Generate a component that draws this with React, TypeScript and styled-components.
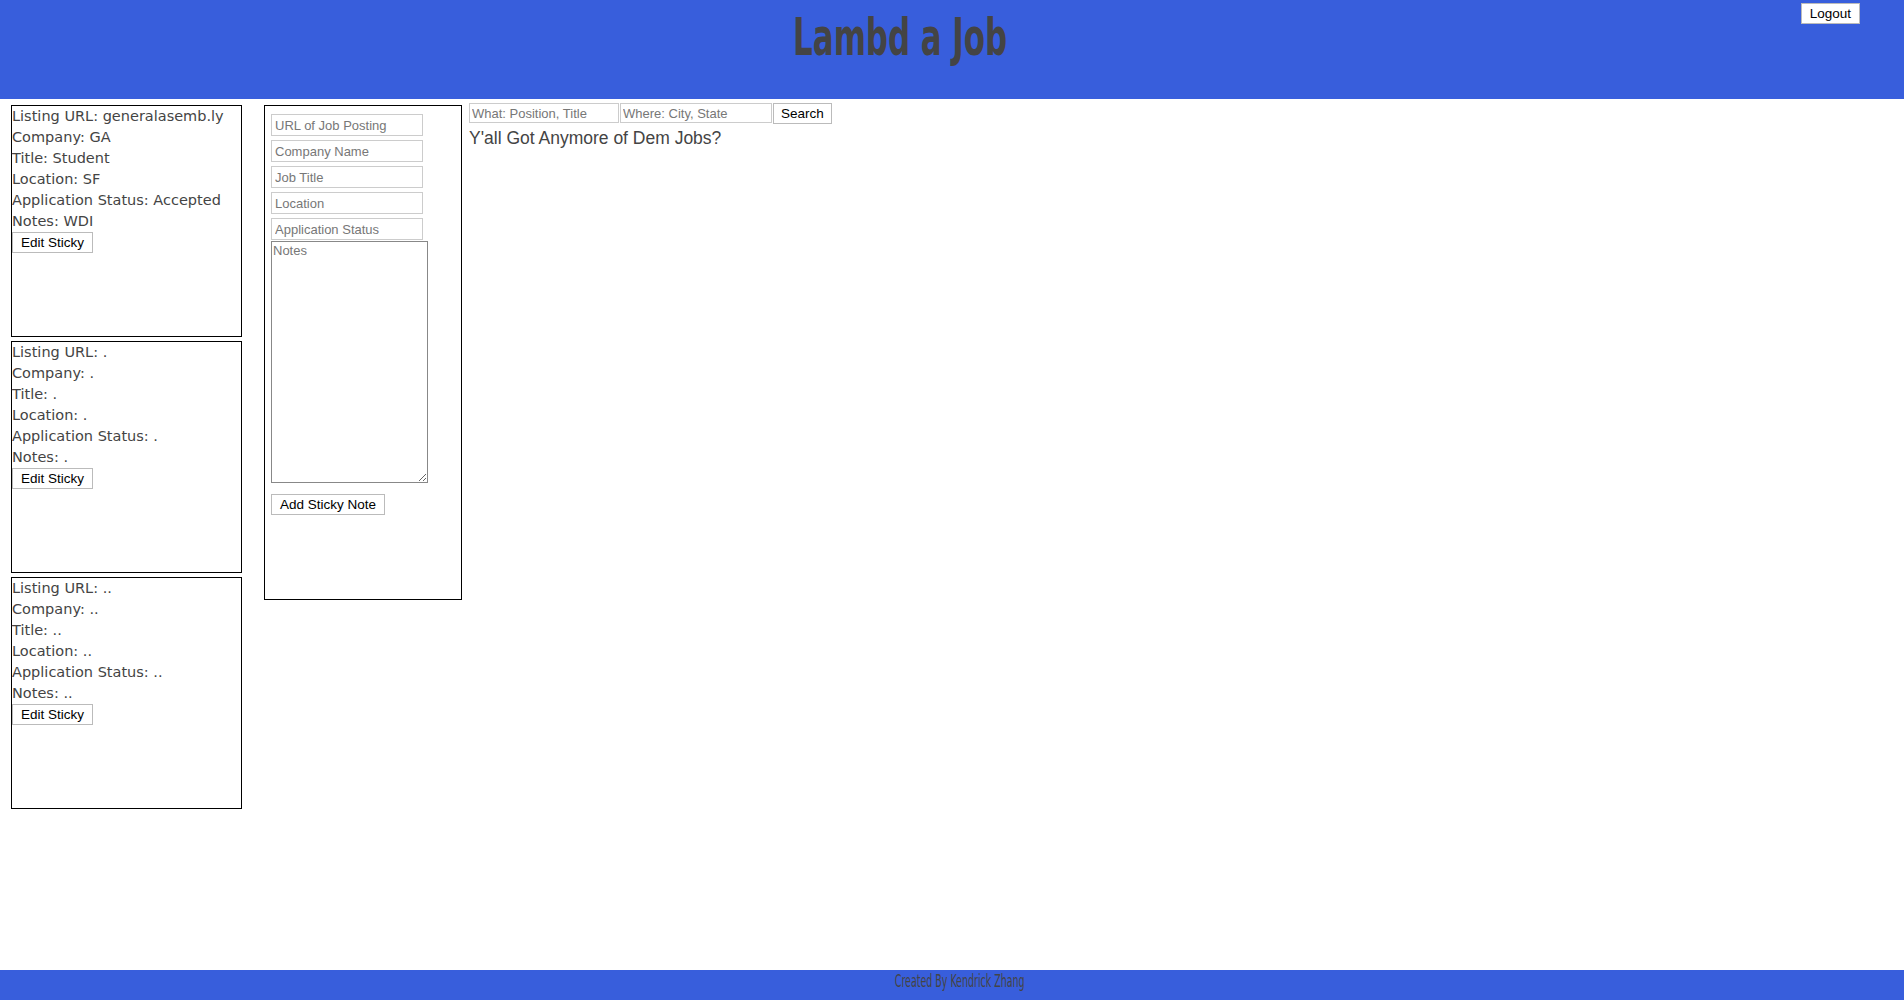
import styled, { createGlobalStyle } from "styled-components";

const GlobalStyle = createGlobalStyle`
    body {
        margin: 0;
        font-family: "Liberation Sans", Arial, sans-serif;
        background: #fff;
    }
`

type Sticky = {
    url: string;
    company: string;
    title: string;
    location: string;
    status: string;
    notes: string;
};

const stickies: Sticky[] = [
    {url: "generalasemb.ly", company: "GA", title: "Student", location: "SF", status: "Accepted", notes: "WDI"},
    {url: ".", company: ".", title: ".", location: ".", status: ".", notes: "."},
    {url: "..", company: "..", title: "..", location: "..", status: "..", notes: ".."},
];

const formFields = ["URL of Job Posting", "Company Name", "Job Title", "Location", "Application Status"];

const App = () => {
    return (
        <Page>
            <GlobalStyle/>
            <Header>
                <Title><Condensed $scale={0.66}>Lambd a Job</Condensed></Title>
                <Button>Logout</Button>
            </Header>
            <Main>
                <StickyColumn>
                    {stickies.map((s, i) => (
                        <StickyCard key={i}>
                            <Line>Listing URL: {s.url}</Line>
                            <Line>Company: {s.company}</Line>
                            <Line>Title: {s.title}</Line>
                            <Line>Location: {s.location}</Line>
                            <Line>Application Status: {s.status}</Line>
                            <Line>Notes: {s.notes}</Line>
                            <Button>Edit Sticky</Button>
                        </StickyCard>
                    ))}
                </StickyColumn>
                <FormPanel>
                    {formFields.map((f) => (
                        <FormInput key={f} placeholder={f}/>
                    ))}
                    <Notes placeholder="Notes"/>
                    <AddButton>Add Sticky Note</AddButton>
                </FormPanel>
                <SearchArea>
                    <SearchRow>
                        <SearchInput placeholder="What: Position, Title"/>
                        <SearchInput placeholder="Where: City, State" $wide/>
                        <SearchButton>Search</SearchButton>
                    </SearchRow>
                    <Heading>Y'all Got Anymore of Dem Jobs?</Heading>
                </SearchArea>
            </Main>
            <Footer>
                <Condensed $scale={0.62}>Created By Kendrick Zhang</Condensed>
            </Footer>
        </Page>
    );
};

export default App;

const blue = "#385edc";

const Page = styled.div`
    min-height: 100vh;
    display: flex;
    flex-direction: column;
`

const Header = styled.header`
    height: 99px;
    background: ${blue};
    display: flex;
    align-items: flex-start;
`

const Title = styled.h1`
    flex: 1;
    margin: 0;
    padding-top: 11px;
    text-align: center;
    font-family: "DejaVu Sans Condensed", "DejaVu Sans", sans-serif;
    font-weight: bold;
    font-size: 52px;
    line-height: 52px;
    color: #444;
`

const Condensed = styled.span<{ $scale: number }>`
    display: inline-block;
    transform: scaleX(${p => p.$scale});
    transform-origin: center;
`

const Button = styled.button`
    height: 21px;
    padding: 0 8px;
    margin: 0;
    background: #fff;
    border: 1px solid #bbb;
    font-family: "Liberation Sans", Arial, sans-serif;
    font-size: 13.5px;
    color: #000;
    cursor: pointer;

    header > & {
        margin: 3px 44px 0 0;
    }
`

const Main = styled.main`
    flex: 1;
    display: flex;
    align-items: flex-start;
`

const StickyColumn = styled.div`
    width: 231px;
    margin: 6px 0 0 11px;
    display: flex;
    flex-direction: column;
    gap: 4px;
`

const StickyCard = styled.div`
    height: 232px;
    box-sizing: border-box;
    border: 1px solid #000;
    font-family: "DejaVu Sans", sans-serif;
    font-size: 14.5px;
    line-height: 21px;
    color: #444;
`

const Line = styled.div`
    white-space: nowrap;
`

const FormPanel = styled.div`
    width: 198px;
    height: 495px;
    box-sizing: border-box;
    margin: 6px 0 0 22px;
    padding: 8px 6px;
    border: 1px solid #000;
    display: flex;
    flex-direction: column;
    align-items: flex-start;
`

const fieldText = `
    font-family: "Liberation Sans", Arial, sans-serif;
    font-size: 13px;
    color: #333;
    outline: none;

    &::placeholder {
        color: #777;
    }
`

const FormInput = styled.input`
    ${fieldText};
    width: 152px;
    height: 22px;
    box-sizing: border-box;
    margin: 0 0 4px;
    padding: 0 3px;
    border: 1px solid #ccc;
`

const Notes = styled.textarea`
    ${fieldText};
    width: 157px;
    height: 242px;
    box-sizing: border-box;
    margin: -3px 0 0;
    padding: 1px;
    border: 1px solid #888;
`

const AddButton = styled(Button)`
    margin-top: 11px;
`

const SearchArea = styled.div`
    margin: 4px 0 0 7px;
`

const SearchRow = styled.div`
    display: flex;
    align-items: flex-start;
    gap: 1px;
`

const SearchInput = styled.input<{ $wide?: boolean }>`
    ${fieldText};
    width: ${p => (p.$wide ? 152 : 150)}px;
    height: 20px;
    box-sizing: border-box;
    margin: 0;
    padding: 0 2px;
    border: 1px solid #ccc;
`

const SearchButton = styled(Button)`
    padding: 0 7px;
`

const Heading = styled.h2`
    margin: 4px 0 0;
    font-family: "Liberation Sans", Arial, sans-serif;
    font-weight: normal;
    font-size: 17.5px;
    color: #444;
`

const Footer = styled.footer`
    height: 30px;
    box-sizing: border-box;
    padding: 3px 0 0 16px;
    background: ${blue};
    text-align: center;
    font-family: "DejaVu Sans Condensed", "DejaVu Sans", sans-serif;
    font-size: 17px;
    line-height: 17px;
    color: #444;
`
